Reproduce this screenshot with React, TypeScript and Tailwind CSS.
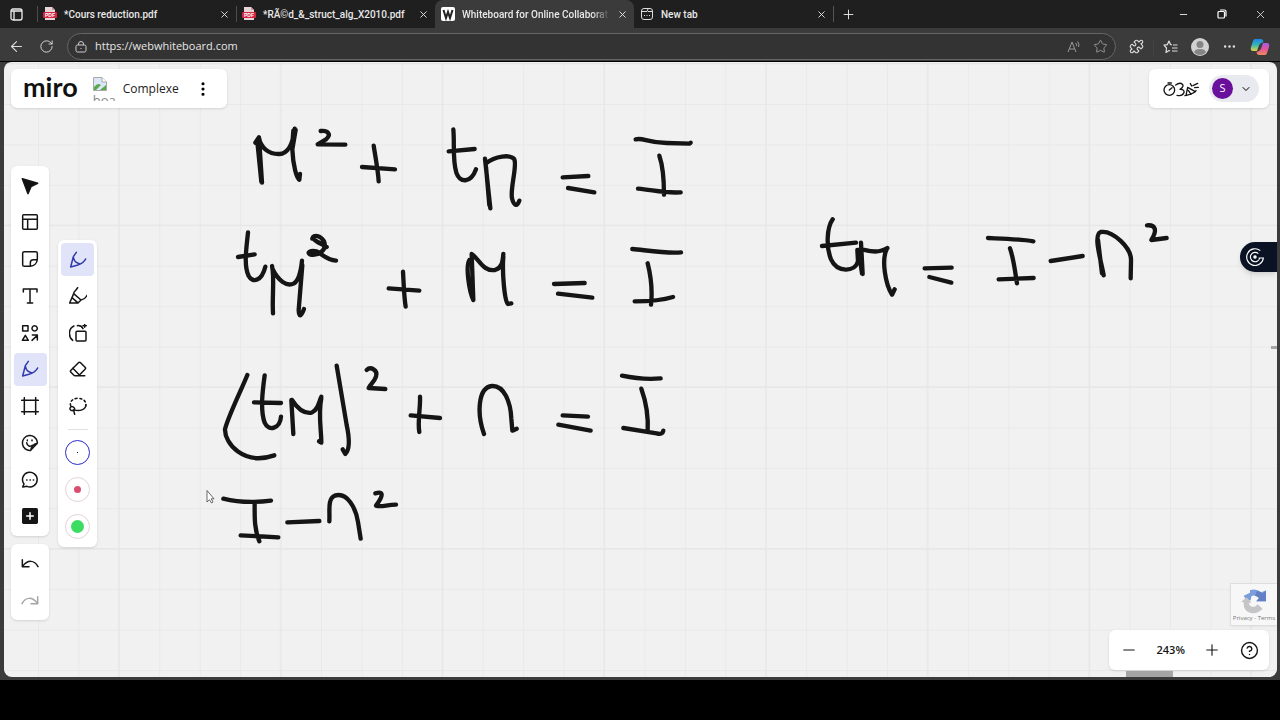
import { useState } from "react";
import type { ReactNode } from "react";
import {
  ArrowLeft,
  ChevronDown,
  CircleQuestionMark,
  Ellipsis,
  EllipsisVertical,
  Eraser,
  Minus,
  Plus,
  Puzzle,
  RotateCw,
  Star,
  X,
} from "lucide-react";

const INK = "#151515";

const strokeGroups = [
  {
    x: 220,
    y: 110,
    paths: [
      "M106 98L117 82L126 218M112 95L124 215M117 84C122 112 145 133 178 132C205 131 218 105 224 56M227 60L217 118C219 165 230 206 238 209L240 192M220 62L216 115",
      "M302 63C322 60 336 72 318 88L293 103L376 104",
      "M461 107C466 140 474 180 476 214M426 171L525 178",
      "M700 58C704 100 697 150 709 188C720 218 752 222 768 178M686 124L764 117",
      "M795 146L811 295M798 170L808 285M798 160C825 138 872 132 883 148C892 168 870 235 876 265C882 290 892 290 898 272",
      "M84 367C80 410 70 465 86 498C98 520 125 514 136 470M54 441L104 433",
      "M156 468C164 500 156 560 159 610M158 478C175 512 200 532 222 520C238 510 243 480 246 452M247 465L236 600Q238 634 252 597",
      "M277 386C280 372 302 376 312 394C322 420 296 438 272 434C258 428 270 420 290 424C310 436 322 450 348 452M278 384C290 398 308 402 320 411",
      "M549 485C551 520 552 560 557 590M506 535L598 542",
      "M748 450C736 470 748 545 760 570L755 432C778 448 790 486 825 480C846 474 848 455 850 432M850 440C846 490 854 575 864 582L874 580",
    ],
  },
  {
    x: 500,
    y: 120,
    paths: [
      "M188 172L265 168M204 204L283 217",
      "M407 58C430 52 440 68 500 69L568 71L572 68M478 107C486 130 492 180 492 224M414 206C460 210 490 220 542 217",
      "M162 492L254 489M174 521L277 533",
      "M397 387C440 391 500 401 543 397M443 430C453 470 458 510 453 554M404 544C450 544 490 540 519 531",
      "M188 886L264 890M175 914L272 932",
      "M366 767C410 776 440 779 482 775M424 806C438 845 446 880 443 935M370 924L470 940Q488 945 490 932",
    ],
  },
  {
    x: 800,
    y: 200,
    paths: [
      "M98 58C80 84 78 140 93 178C112 220 166 216 174 184L172 150M66 138L168 128",
      "M183 128L188 222M176 150L186 220M186 148C205 152 235 162 262 144M260 148C244 180 256 252 276 284L284 268",
      "M374 205L455 203M388 231L454 248",
      "M564 114C610 116 660 117 700 124M630 145C642 180 645 215 651 250M596 238L701 234",
      "M752 183L848 168",
      "M911 226C904 184 878 104 902 96C938 90 996 144 993 184L992 235M894 120L906 220",
      "M1041 76C1068 74 1072 92 1054 120L1100 114",
    ],
  },
  {
    x: 200,
    y: 350,
    paths: [
      "M142 75C124 120 84 200 75 238C74 280 130 348 223 316",
      "M194 76C188 120 180 180 194 218C206 246 240 236 243 200M162 157L243 159",
      "M274 150L280 252M276 150C290 172 310 192 335 188C356 178 356 156 364 140M364 145C354 190 364 240 364 278L357 274",
      "M410 47L440 225C448 262 450 298 436 312L428 298",
      "M500 60C512 48 534 60 528 80C524 94 510 104 506 114L556 117",
      "M660 140C662 170 652 216 658 246M632 196L720 204",
      "M852 252C830 190 834 112 876 108C912 106 932 156 934 206L937 242L950 236",
      "M70 446C110 456 150 460 213 452M164 460C164 500 162 534 178 574M122 556L235 562",
      "M262 517L358 513",
      "M388 514C390 484 382 446 404 437C442 424 468 476 474 516L482 566",
      "M526 430C552 422 550 438 528 467C545 472 560 464 588 464",
    ],
  },
];

const tools = [
  "Select",
  "Templates",
  "Sticky note",
  "Text",
  "Shapes",
  "Pen",
  "Frame",
  "Stickers",
  "Comment",
  "More",
];

const PEN = "M22 4L13 17L5 48L24 43C36 39 46 32 50 24M13 19L16 28Q20 35 31 38";

const icons: Record<string, ReactNode> = {
  Select: <path d="M4 5L50 19L30 29L21 50Z" fill="#111" />,
  Templates: <path d="M8 5H46Q49 5 49 8V46Q49 49 46 49H8Q5 49 5 46V8Q5 5 8 5ZM5 19H49M20 19V49" />,
  "Sticky note": (
    <path d="M10 5H44Q49 5 49 10V28C48 40 39 48 28 49H10Q5 49 5 44V10Q5 5 10 5ZM28 49V38Q28 29 37 29H49" />
  ),
  Text: <path d="M7 15V6H48V15M27 6V48M19 48H35" />,
  Shapes: (
    <path d="M5 5H21V21H5ZM41 5A8 8 0 1 1 40.9 5ZM13 34L22 49H4ZM33 49L49 34M34 33H49V48" />
  ),
  Pen: <path d={PEN} />,
  Frame: <path d="M2 10H52M2 44H52M10 2V52M44 2V52" />,
  Stickers: (
    <>
      <path d="M49 24A22.500 22.500 0 1 0 29 49.500C30 40 35 31 49 28ZM29 49L49 28" />
      <path d="M17 26C18 37 29 39 34 34M19 18V20M33 18V20" />
    </>
  ),
  Comment: (
    <>
      <path d="M5 48L9 39A22 22 0 1 1 18 46Z" />
      <path d="M17 27H18M27 27H28M37 27H38" />
    </>
  ),
  More: (
    <>
      <rect x="3" y="3" width="48" height="48" rx="5" fill="#151515" stroke="none" />
      <path d="M27 17V37M17 27H37" stroke="white" />
    </>
  ),
  Highlighter: <path d="M26 2C22 11 13 14 14 20L2 48H27L36 39C44 38 50 33 54 25M14 20L36 39M9 32L26 47" />,
  "Smart drawing": (
    <path d="M11 49C-3 38 -2 13 15 6M25 5C34 4 39 8 42 14M24 22H48Q51 22 51 25V48Q51 51 48 51H24Q21 51 21 48V25Q21 22 24 22ZM47 0V10M42 5H52" />
  ),
  Lasso: (
    <>
      <path d="M5 26C1 14 11 4 27 4C43 4 53 14 50 26" strokeDasharray="6 8" />
      <path d="M51 24C50 37 32 45 14 38M14 38A6 6 0 1 1 11 29C18 31 18 38 15 41C14 44 16 46 17 52" />
    </>
  ),
  Undo: <path d="M4 14V35H24M5 34C20 14 40 14 51 35" />,
  Redo: <path d="M50 14V35H30M49 34C34 14 14 14 3 35" />,
};

function Glyph({ name }: { name: string }) {
  return (
    <svg
      viewBox="0 0 54 54"
      className="size-[18px]"
      fill="none"
      stroke="currentColor"
      strokeWidth="4.500"
      strokeLinecap="round"
      strokeLinejoin="round"
    >
      {icons[name]}
    </svg>
  );
}

function ToolButton({
  name,
  active,
  muted,
  onClick,
}: {
  name: string;
  active?: boolean;
  muted?: boolean;
  onClick?: () => void;
}) {
  return (
    <button
      type="button"
      aria-label={name}
      onClick={onClick}
      className={`flex size-[33px] items-center justify-center rounded-sm ${
        active ? "bg-[#e1e4f9] text-[#3038ad]" : muted ? "text-[#a5a5a8]" : "text-[#151515]"
      }`}
    >
      {name === "Eraser" ? <Eraser size={18} strokeWidth={2} /> : <Glyph name={name} />}
    </button>
  );
}

function PdfIcon() {
  return (
    <svg viewBox="0 0 14 14" className="size-[14px] shrink-0">
      <path d="M2 0H9L12 3V13H2Z" fill="#e9d5d8" />
      <path d="M9 0V3H12Z" fill="#b9a0a4" />
      <rect x="0" y="5" width="14" height="6" rx="1" fill="#d32440" />
      <text x="7" y="9.700" fontSize="5" fontWeight="700" textAnchor="middle" fill="white" fontFamily="Liberation Sans, sans-serif">
        PDF
      </text>
    </svg>
  );
}

function WhiteboardIcon() {
  return (
    <svg viewBox="0 0 14 14" className="size-[14px] shrink-0">
      <rect width="14" height="14" rx="2" fill="white" />
      <path d="M2.500 3L5 11L7 5L9 11L11.500 3" fill="none" stroke="#222" strokeWidth="2" />
    </svg>
  );
}

function NewTabIcon() {
  return (
    <svg viewBox="0 0 14 14" className="size-[14px] shrink-0" fill="none" stroke="#ddd">
      <rect x="1.500" y="1.500" width="11" height="11" rx="2.500" />
      <path d="M1.500 4.500H7L8 2M8 4.500H12.500M4 8.500H5M6.500 8.500H7.500M9 8.500H10" />
    </svg>
  );
}

const tabs = [
  { title: "*Cours reduction.pdf", icon: <PdfIcon /> },
  { title: "*RÃ©d_&_struct_alg_X2010.pdf", icon: <PdfIcon /> },
  { title: "Whiteboard for Online Collaborat", icon: <WhiteboardIcon />, active: true },
  { title: "New tab", icon: <NewTabIcon /> },
];

function TabBar() {
  return (
    <div className="flex h-7 items-stretch bg-[#1f1f1f] text-[#e8e8e8]">
      <button type="button" aria-label="Tab actions" className="flex w-[37px] shrink-0 items-center pl-[10px]">
        <svg viewBox="0 0 13 13" className="size-[13px]" fill="none" stroke="#eee" strokeWidth="1.300">
          <rect x="1" y="1" width="11" height="11" rx="2" />
          <path d="M1 3H12M4 3V12" />
        </svg>
      </button>
      {tabs.map((tab, index) => (
        <div
          key={tab.title}
          className={`relative flex w-[199px] min-w-0 items-center gap-[7px] pr-[6px] pl-[6px] ${
            tab.active ? "rounded-t-lg bg-[#3b3b3b]" : ""
          }`}
        >
          {index < 2 && <span className="absolute top-1.5 left-0 h-4 w-px bg-[#4c4c4c]" />}
          {tab.icon}
          <span
            className={`min-w-0 flex-1 whitespace-nowrap font-['Roboto',sans-serif] text-[10px] font-medium ${
              tab.active ? "[mask-image:linear-gradient(to_right,black_88%,transparent)]" : ""
            }`}
          >
            {tab.title}
          </span>
          <button type="button" aria-label="Close tab" className="shrink-0">
            <X size={11} strokeWidth={2} />
          </button>
        </div>
      ))}
      <button type="button" aria-label="New tab" className="my-1.5 flex items-center border-l border-[#555] pl-[7px]">
        <Plus size={15} strokeWidth={1.5} />
      </button>
      <div className="ml-auto flex w-[116px] items-center justify-between pr-[13px] pl-[14px]">
        <button type="button" aria-label="Minimize">
          <Minus size={11} />
        </button>
        <button type="button" aria-label="Restore">
          <svg viewBox="0 0 10 10" className="size-[10px]" fill="none" stroke="white" strokeWidth="1.200">
            <rect x="1" y="2.500" width="6.500" height="6.500" rx="1" />
            <path d="M3 1H7.500Q9 1 9 2.500V7.500" />
          </svg>
        </button>
        <button type="button" aria-label="Close">
          <X size={13} strokeWidth={1.5} />
        </button>
      </div>
    </div>
  );
}

function AddressBar() {
  return (
    <div className="flex h-[33px] items-center bg-[#3b3b3b] pt-1 text-[#dedede]">
      <button type="button" aria-label="Back" className="ml-2 w-4">
        <ArrowLeft size={17} strokeWidth={1.5} />
      </button>
      <button type="button" aria-label="Refresh" className="ml-[15px] w-4">
        <RotateCw size={15} strokeWidth={1.5} />
      </button>
      <div className="ml-3 flex h-[27px] flex-1 items-center rounded-full border border-[#666] bg-[#333] pr-[7px] pl-[7px]">
        <svg viewBox="0 0 12 12" className="size-[12px]" fill="none" stroke="#ccc">
          <rect x="1" y="4" width="10" height="7" rx="1.500" />
          <path d="M3.500 4V3A2.500 2.500 0 0 1 8.500 3V4M6 7V8" />
        </svg>
        <input
          aria-label="Address"
          defaultValue="https://webwhiteboard.com"
          className="ml-2 min-w-0 flex-1 bg-transparent text-[11px] text-[#e6e6e6] outline-none"
        />
        <button type="button" aria-label="Read aloud">
          <svg viewBox="0 0 14 14" className="size-[14px]" fill="none" stroke="#999">
            <path d="M1 12L5 2L9 12M2.500 9H7.500M8.500 3Q10 4 9.500 6M10.500 1.500Q13 4 11.500 7" />
          </svg>
        </button>
        <button type="button" aria-label="Add to favorites" className="ml-3 text-[#999]">
          <Star size={15} strokeWidth={1.5} />
        </button>
      </div>
      <div className="flex w-[164px] items-center gap-[13px] pl-[13px]">
        <button type="button" aria-label="Extensions">
          <Puzzle size={15} strokeWidth={1.8} />
        </button>
        <span className="-mx-1 h-4 w-px bg-[#444]" />
        <button type="button" aria-label="Favorites">
          <svg viewBox="0 0 15 14" className="h-[14px] w-[15px]" fill="none" stroke="currentColor" strokeWidth="1.200" strokeLinejoin="round">
            <path d="M9 5L7.500 4.500L6 1L4.300 4.700L1 5.200L3.500 8L3 12.500L6 10.500L7 11M10 5H14.500M9 8H14.500M9 11H14.500" />
          </svg>
        </button>
        <button type="button" aria-label="Profile">
          <svg viewBox="0 0 18 18" className="size-[18px]">
            <circle cx="9" cy="9" r="9" fill="#d2d2d2" />
            <circle cx="9" cy="6.500" r="3.500" fill="#858585" />
            <path d="M3 14Q4 11 9 11T15 14Q13 17 9 17T3 14Z" fill="#858585" />
          </svg>
        </button>
        <button type="button" aria-label="Settings">
          <Ellipsis size={15} />
        </button>
        <button type="button" aria-label="Copilot">
          <svg viewBox="0 0 20 18" className="h-[18px] w-5">
            <defs>
              <linearGradient id="copilot-a" x1="0" y1="0" x2="0" y2="1">
                <stop stopColor="#2084e8" />
                <stop offset="0.500" stopColor="#35b6b0" />
                <stop offset="1" stopColor="#e7d247" />
              </linearGradient>
              <linearGradient id="copilot-b" x1="0" y1="0" x2="0" y2="1">
                <stop stopColor="#a45ce8" />
                <stop offset="0.500" stopColor="#e2559a" />
                <stop offset="1" stopColor="#f38a5d" />
              </linearGradient>
            </defs>
            <path d="M5 1H11Q13 1 13.500 4L11 5Q9 6 8 10L7 13H3Q0 13 1 9L3 3Q3.500 1 5 1Z" fill="url(#copilot-a)" />
            <path d="M13 5H17Q20 5 19 9L17 15Q16.500 17 15 17H9Q7 17 6.500 14L9 13Q11 12 12 8Z" fill="url(#copilot-b)" />
          </svg>
        </button>
      </div>
    </div>
  );
}

function Drawing() {
  return (
    <svg className="absolute inset-0 size-full" aria-hidden="true">
      <defs>
        <pattern id="grid" x="34" y="42" width="40.430" height="40.430" patternUnits="userSpaceOnUse">
          <path d="M0.500 0V41M0 0.500H41" stroke="#e9e9e9" fill="none" />
        </pattern>
        <pattern id="grid-major" x="34" y="1" width="161.720" height="161.720" patternUnits="userSpaceOnUse">
          <path d="M80.900 0V162M0 0.500H162" stroke="#e5e5e5" fill="none" />
        </pattern>
      </defs>
      <rect width="100%" height="100%" fill="url(#grid)" />
      <rect width="100%" height="100%" fill="url(#grid-major)" />
      <g transform="translate(-4 -62)">
        {strokeGroups.map((group) => (
          <g
            key={`${group.x}-${group.y}`}
            transform={`translate(${group.x} ${group.y}) scale(0.33333)`}
            fill="none"
            stroke={INK}
            strokeWidth="13"
            strokeLinecap="round"
            strokeLinejoin="round"
          >
            {group.paths.map((d) => (
              <path key={d} d={d} />
            ))}
          </g>
        ))}
        <path d="M207 490.500V502L209.500 499.700L211.500 503L213 502L211.200 498.800H214Z" fill="white" stroke="#444" strokeWidth="0.800" />
      </g>
    </svg>
  );
}

function BoardHeader() {
  return (
    <header className="flex items-start justify-between">
      <div className="flex h-[39px] w-[216px] items-center rounded-md bg-white pl-3 shadow-sm">
        <a href="#home" className="-mt-1 font-['Lato',sans-serif] text-[27px] leading-8 font-bold text-[#111]">
          miro
        </a>
        <span className="ml-[15px] h-6 w-[23px] overflow-hidden text-[13px] leading-[18px] text-[#8a8a8a]">
          <svg viewBox="0 0 14 14" className="block size-[14px]">
            <path d="M0.500 0.500H9L13.500 5V13.500H0.500Z" fill="#dce6f8" stroke="#a8a8a8" />
            <path d="M9 0.500V5H13.500" fill="white" stroke="#a8a8a8" />
            <path d="M1 13V10Q5 5 8 8L3 13Z" fill="#5ba94e" />
            <path d="M7 13L13 8V13Z" fill="#5ba94e" />
          </svg>
          board
        </span>
        <h1 className="ml-[7px] text-xs font-medium text-[#222]">Complexe</h1>
        <button type="button" aria-label="Board menu" className="ml-[15px]">
          <EllipsisVertical size={18} strokeWidth={2.2} />
        </button>
      </div>
      <div className="flex h-[39px] w-[120px] items-center rounded-md bg-white pr-[10px] pl-[14px] shadow-sm">
        <button type="button" aria-label="Activities">
          <svg viewBox="0 0 108 48" className="h-4 w-9" fill="none" stroke="#151515" strokeWidth="4" strokeLinecap="round" strokeLinejoin="round">
            <circle cx="19" cy="27" r="16" />
            <path d="M15 6H25M19 27L27 20M38 12C55 0 70 14 51 25C72 24 64 48 42 43M66 44C78 40 92 40 99 29M69 43L74 19L97 32M74 19L97 32M82 8L86 15M90 14L104 7M95 20L106 19M76 28L84 40" />
          </svg>
        </button>
        <button type="button" aria-label="Account" className="ml-auto flex h-[27px] w-[50px] items-center gap-[7px] rounded-full bg-[#e9eaef] pl-[3px]">
          <span className="flex size-[21px] items-center justify-center rounded-full bg-[#6a0f9c] text-[11px] text-white">S</span>
          <ChevronDown size={12} />
        </button>
      </div>
    </header>
  );
}

export default function App() {
  const [tool, setTool] = useState("Pen");
  const [brush, setBrush] = useState("Pen");
  const [zoom, setZoom] = useState(243);

  return (
    <div className="flex h-screen flex-col bg-black pb-10 font-['Open_Sans','Noto_Sans',sans-serif]">
      <TabBar />
      <AddressBar />
      <div className="flex min-h-0 flex-1 border-t border-black bg-[#3b3b3b] pr-[3px] pb-[3px] pl-1">
        <main className="relative flex min-w-0 flex-1 flex-col overflow-hidden rounded-lg bg-[#f1f1f1]">
          <Drawing />
          <div className="relative flex flex-1 flex-col p-[7px] pr-2">
            <BoardHeader />
            <div className="flex flex-1 items-start gap-[9px]">
              <div className="mt-[58px] flex flex-col gap-2">
                <nav aria-label="Tools" className="flex h-[370px] w-[38px] flex-col items-center justify-between rounded-md bg-white py-[3px] shadow-sm">
                  {tools.map((name) => (
                    <ToolButton key={name} name={name} active={tool === name} onClick={() => setTool(name)} />
                  ))}
                </nav>
                <div className="flex w-[38px] flex-col items-center gap-1 rounded-md bg-white py-[3px] shadow-sm">
                  <ToolButton name="Undo" />
                  <ToolButton name="Redo" muted />
                </div>
              </div>
              <div className="mt-[132px] flex w-[39px] flex-col items-center rounded-md bg-white pt-[3px] pb-2 shadow-sm">
                <div className="flex h-[179px] flex-col justify-between">
                  {["Pen", "Highlighter", "Smart drawing", "Eraser", "Lasso"].map((name) => (
                    <ToolButton key={name} name={name} active={brush === name} onClick={() => setBrush(name)} />
                  ))}
                </div>
                <span className="mt-[7px] mb-[10px] h-px w-5 bg-[#e0e0e6]" />
                <div className="flex flex-col gap-3">
                  <button type="button" aria-label="Thin pen" className="flex size-[25px] items-center justify-center rounded-full border border-[#2a2acb]">
                    <span className="size-px bg-black" />
                  </button>
                  <button type="button" aria-label="Red pen" className="flex size-[25px] items-center justify-center rounded-full border border-[#e3d3db]">
                    <span className="size-[7px] rounded-full bg-[#dc4c6e]" />
                  </button>
                  <button type="button" aria-label="Green pen" className="flex size-[25px] items-center justify-center rounded-full border border-[#e3d3db]">
                    <span className="size-[13px] rounded-full bg-[#3bdc62]" />
                  </button>
                </div>
              </div>
            </div>
            <footer className="flex justify-end">
              <div className="flex h-10 w-40 items-center justify-between rounded-md bg-white pr-[10px] pl-[11px] text-[#151515] shadow-sm">
                <button type="button" aria-label="Zoom out" onClick={() => setZoom(zoom - 10)}>
                  <Minus size={18} strokeWidth={1.5} />
                </button>
                <span className="text-[11px] font-semibold">{zoom}%</span>
                <button type="button" aria-label="Zoom in" onClick={() => setZoom(zoom + 10)}>
                  <Plus size={18} strokeWidth={1.5} />
                </button>
                <button type="button" aria-label="Help">
                  <CircleQuestionMark size={19} strokeWidth={1.8} />
                </button>
              </div>
            </footer>
          </div>

          <button type="button" aria-label="Assistant" className="absolute top-[180px] right-0 flex h-[30px] w-[37px] items-center rounded-l-full bg-[#0b1224] pl-[6px] shadow-md">
            <svg viewBox="0 0 54 54" className="size-[18px]" fill="none" stroke="white" strokeWidth="3.500">
              <path d="M43 8A25 25 0 1 0 52 30H38M37 17A14 14 0 1 0 41 30" />
              <circle cx="27" cy="27" r="3.500" fill="white" />
            </svg>
          </button>

          <div className="absolute right-0 bottom-[52px] flex h-[41px] w-[46px] flex-col items-center bg-[#f7f7f7] pt-1 shadow-sm ring-1 ring-[#dedede]">
            <svg viewBox="0 0 75 75" className="size-[26px]">
              <path d="M8 22L26 14V6Q44 0 58 12L72 7V38H44L52 29Q40 18 30 24L28 36L14 34Z" fill="#7b9ddd" />
              <path d="M46 9Q56 10 62 16L72 7V38H44L52 29Q48 24 40 22Z" fill="#647fc4" />
              <path d="M1 40L16 27L30 42L22 43Q26 56 40 54L48 47L62 60Q48 76 28 72Q6 66 8 42Z" fill="#c5c5c8" />
            </svg>
            <span className="text-[6px] leading-2 whitespace-nowrap text-[#777]">Privacy - Terms</span>
          </div>

          <span className="absolute top-[284px] right-0 h-[3px] w-1.5 bg-[#a5a5a5]" />
          <span className="absolute right-[104px] bottom-0 h-1.5 w-[47px] bg-[#a5a5a5]" />
        </main>
      </div>
    </div>
  );
}
